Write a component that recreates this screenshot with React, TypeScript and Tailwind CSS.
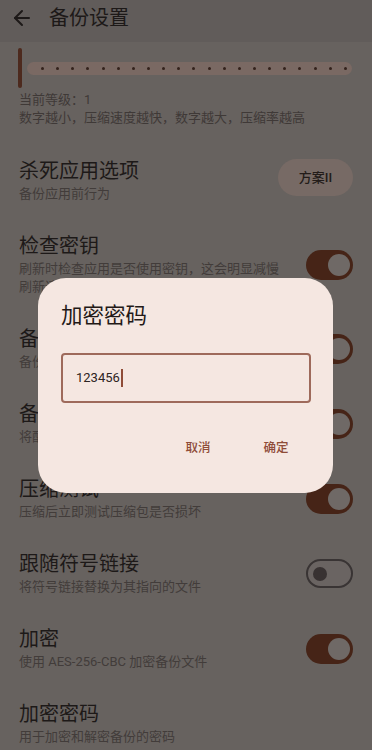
import { ArrowLeft } from "lucide-react";

const FONT = { fontFamily: 'Roboto, "Noto Sans CJK SC", sans-serif' };

function Toggle({ on }: { on: boolean }) {
  if (on) {
    return (
      <div className="w-[47px] h-[30px] shrink-0 rounded-full bg-[#462417] flex items-center justify-end pr-[3px]">
        <div className="w-[22px] h-[22px] rounded-full bg-[#6f6966]" />
      </div>
    );
  }
  return (
    <div className="w-[47px] h-[29px] shrink-0 rounded-full border-2 border-[#393434] bg-[#6a6462] flex items-center pl-[5px]">
      <div className="w-[14px] h-[14px] rounded-full bg-[#383232]" />
    </div>
  );
}

type Row = {
  title: string;
  sub: string;
  right?: "on" | "off" | "button";
};

const rows: Row[] = [
  { title: "杀死应用选项", sub: "备份应用前行为", right: "button" },
  { title: "检查密钥", sub: "刷新时检查应用是否使用密钥，这会明显减慢刷新速度", right: "on" },
  { title: "备份自身", sub: "备份本应用的安装包", right: "on" },
  { title: "备份配置", sub: "将配置文件备份至备份目录", right: "on" },
  { title: "压缩测试", sub: "压缩后立即测试压缩包是否损坏", right: "on" },
  { title: "跟随符号链接", sub: "将符号链接替换为其指向的文件", right: "off" },
  { title: "加密", sub: "使用 AES-256-CBC 加密备份文件", right: "on" },
  { title: "加密密码", sub: "用于加密和解密备份的密码" },
];

export default function App() {
  return (
    <div className="relative w-[372px] h-[750px] overflow-hidden bg-[#67625f]" style={FONT}>
      {/* top bar */}
      <div className="h-[42px] bg-[#615c5a]">
        <div className="h-[36px] flex items-center">
          <ArrowLeft size={24} strokeWidth={2} className="ml-[10px] text-[#1d1918]" />
          <span className="ml-[15px] text-[20px] leading-[27px] text-[#1d1918]">备份设置</span>
        </div>
      </div>

      {/* compression level slider */}
      <div className="mt-[6px] h-[40px] flex items-center pl-[18px] pr-[20px]">
        <div className="w-[4px] h-[40px] rounded-full bg-[#4d2a1e]" />
        <div className="ml-[5px] flex-1 h-[13px] rounded-full bg-[#7a6963] flex items-center justify-between pl-[14px] pr-[5px]">
          {Array.from({ length: 21 }).map((_, i) => (
            <div key={i} className="w-[3px] h-[3px] rounded-full bg-[#33221c]" />
          ))}
        </div>
      </div>
      <div className="mt-[3px] pl-[19px] text-[13px] leading-[18px] text-[#3f3937]">
        <div>当前等级：1</div>
        <div>数字越小，压缩速度越快，数字越大，压缩率越高</div>
      </div>

      {/* rows */}
      <div className="mt-[16px]">
        {rows.map((r) => (
          <div key={r.title} className="flex items-center gap-[20px] px-[19px] py-[15px]">
            <div className="flex-1 min-w-0">
              <div className="text-[20px] leading-[27px] text-[#1d1918]">{r.title}</div>
              <div className="text-[13px] leading-[18px] text-[#423c3a]">{r.sub}</div>
            </div>
            {r.right === "button" && (
              <div className="w-[75px] h-[37px] shrink-0 rounded-full bg-[#776a65] flex items-center justify-center text-[13px] font-medium text-[#231c19] -mt-[6px]">
                方案II
              </div>
            )}
            {r.right === "on" && <Toggle on />}
            {r.right === "off" && <Toggle on={false} />}
          </div>
        ))}
      </div>

      {/* password dialog */}
      <div className="absolute left-[38px] top-[278px] w-[295px] rounded-[28px] bg-[#f5e7e1] pt-[24px] pb-[27px]">
        <div className="pl-[23px] text-[21.5px] leading-[28px] text-[#231917]">加密密码</div>
        <div className="mt-[22.5px] ml-[23px] mr-[22px] h-[50.5px] rounded-[4px] border-2 border-[#9e6a5b] flex items-center pl-[13px]">
          <span className="text-[13px] leading-[18px] text-[#2d2422]">123456</span>
          <span className="ml-[1px] w-[2px] h-[18px] bg-[#8f4c38]" />
        </div>
        <div className="mt-[27px] flex justify-end gap-[20px] pr-[28px]">
          <button className="w-[58px] h-[36px] text-[12.5px] font-medium text-[#8f4c38]">取消</button>
          <button className="w-[58px] h-[36px] text-[12.5px] font-medium text-[#8f4c38]">确定</button>
        </div>
      </div>
    </div>
  );
}
